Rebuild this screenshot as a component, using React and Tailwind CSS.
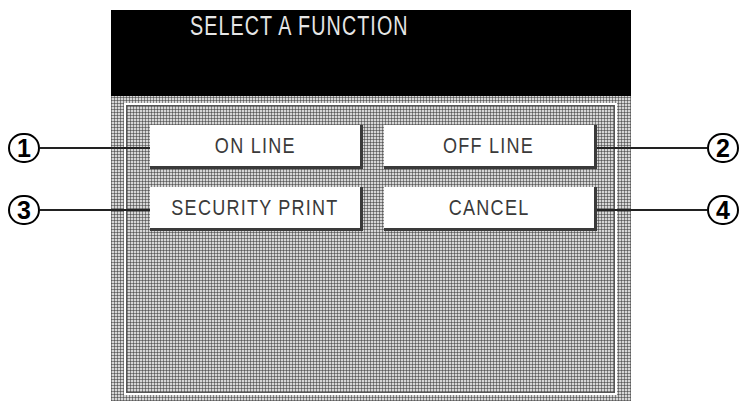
const hatch =
  "bg-[#d6d6d6] [background-image:repeating-linear-gradient(0deg,rgba(50,50,50,0.5)_0_1px,transparent_1px_3px),repeating-linear-gradient(90deg,rgba(50,50,50,0.5)_0_1px,transparent_1px_3px)]";

const Button = ({ label }) => (
  <div className="h-[44px] w-[213px] bg-white border-r-[3px] border-b-[3px] border-[#3a3a3a] flex items-center justify-center">
    <span className="inline-block scale-x-[0.82] text-[22px] text-[#3a3a3a] tracking-[1.5px] font-['Liberation_Sans',sans-serif]">
      {label}
    </span>
  </div>
);

const Circle = ({ n }) => (
  <div className="w-[32px] h-[30px] shrink-0 rounded-full border-2 border-black bg-white flex items-center justify-center">
    <span className="text-[25px] font-bold text-black leading-none font-['Liberation_Sans',sans-serif]">
      {n}
    </span>
  </div>
);

const Callout = ({ n, side, className }) => (
  <div
    className={`absolute flex items-center ${side === "right" ? "flex-row-reverse" : ""} ${className}`}
  >
    <Circle n={n} />
    <div className="w-[110px] h-[2px] bg-[#222]" />
  </div>
);

export default function App() {
  return (
    <div className="relative w-[743px] h-[401px] bg-white overflow-hidden">
      <div className="ml-[111px] mt-[10px] w-[520px] h-[391px] flex flex-col">
        <div className="h-[86px] bg-black pl-[79px] pt-[3px]">
          <span className="inline-block origin-left scale-x-[0.73] text-[27px] leading-none text-[#e6e6e6] tracking-[1.5px] font-['Liberation_Sans',sans-serif]">
            SELECT A FUNCTION
          </span>
        </div>
        <div className={`flex-1 pl-[13px] pr-[14px] pt-[7px] pb-[6px] ${hatch}`}>
          <div className="h-full border-2 border-white">
            <div className={`h-full border border-[#555] pl-[23px] pt-[19px] ${hatch}`}>
              <div className="grid grid-cols-[213px_213px] gap-x-[21px] gap-y-[18px]">
                <Button label="ON LINE" />
                <Button label="OFF LINE" />
                <Button label="SECURITY PRINT" />
                <Button label="CANCEL" />
              </div>
            </div>
          </div>
        </div>
      </div>

      <Callout n="1" className="left-[8px] top-[133px]" />
      <Callout n="3" className="left-[8px] top-[195px]" />
      <Callout n="2" side="right" className="left-[597px] top-[133px]" />
      <Callout n="4" side="right" className="left-[597px] top-[195px]" />
    </div>
  );
}
